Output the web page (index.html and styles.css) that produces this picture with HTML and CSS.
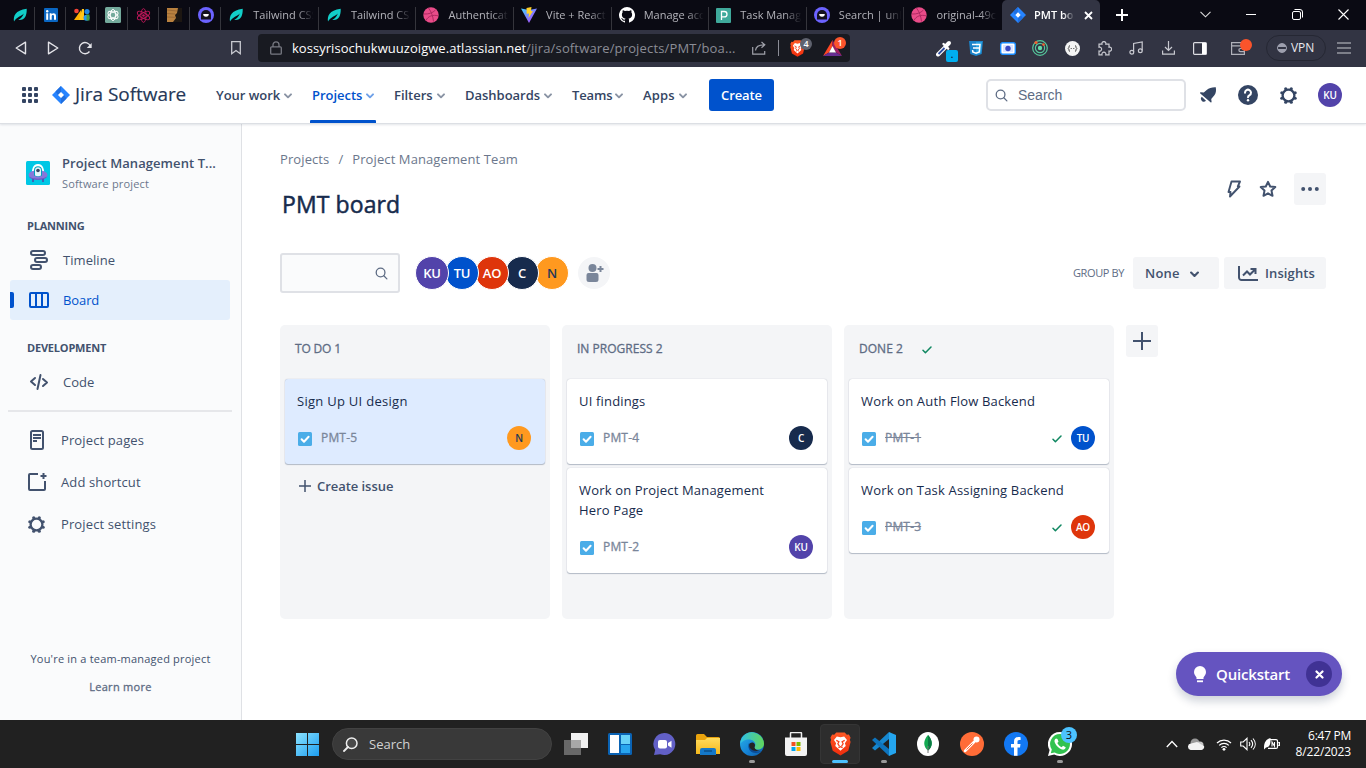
FILE: index.html
```html
<!DOCTYPE html>
<html lang="en">
<head>
<meta charset="utf-8">
<title>PMT board</title>
<link rel="stylesheet" href="styles.css">
</head>
<body>
<svg class="defs" width="0" height="0">
  <defs>
    <linearGradient id="gEdge" x1="0" y1="0" x2="1" y2="1"><stop offset="0" stop-color="#2bb4e8"/><stop offset=".55" stop-color="#1583d6"/><stop offset="1" stop-color="#0c59a4"/></linearGradient>
    <linearGradient id="gWave" x1="0" y1="0" x2="1" y2="0"><stop offset="0" stop-color="#2fc0e6"/><stop offset="1" stop-color="#62d65a"/></linearGradient>
    <linearGradient id="gWin" x1="0" y1="0" x2="1" y2="1"><stop offset="0" stop-color="#8be3ff"/><stop offset="1" stop-color="#1c9df0"/></linearGradient>
    <linearGradient id="gVite" x1="0" y1="0" x2="1" y2="1"><stop offset="0" stop-color="#41d1ff"/><stop offset="1" stop-color="#bd34fe"/></linearGradient>
    <linearGradient id="gFolder" x1="0" y1="0" x2="0" y2="1"><stop offset="0" stop-color="#ffdc5e"/><stop offset="1" stop-color="#f5b81c"/></linearGradient>
    <linearGradient id="gBrave" x1="0" y1="0" x2="0" y2="1"><stop offset="0" stop-color="#ff5a26"/><stop offset="1" stop-color="#f02c0c"/></linearGradient>
  </defs>
  <symbol id="leaf" viewBox="0 0 14 14"><path d="M1 13.500C.2 8 2 2.500 13.700.800 14 8 11.500 12.800 5.200 12 8 10.500 9.800 8.500 10.800 5.500 8.500 8 3.500 9 1 13.500Z" fill="#12cfc9"/></symbol>
  <symbol id="unlogo" viewBox="0 0 16 16"><circle cx="8" cy="8" r="8" fill="#6c63ff"/><path d="M3 12.500V8a5 5 0 0 1 10 0v4.500Z" fill="#14121f"/><path d="M5.200 7h5.600a2.800 2.800 0 0 1-5.600 0Z" fill="#fff"/></symbol>
  <symbol id="dribbble" viewBox="0 0 16 16"><circle cx="8" cy="8" r="7.700" fill="#ea4c89"/><path d="M1 7c4.500.2 8.500-.8 11.500-4M5.500 1c3 4 4.500 8.500 5 13.500M3 13.500C5 9 10 7.500 15 8.800" fill="none" stroke="#b02a62" stroke-width="1"/></symbol>
  <symbol id="jira" viewBox="0 0 18 18"><path d="M9 0l9 9-9 9-9-9Z" fill="#2684ff"/><path d="M9 0v6L6 9 3.500 5.500Z" fill="#1f6fe0"/><path d="M9 18v-6l3-3 2.500 3.500Z" fill="#1f6fe0"/><path d="M9 6l3 3-3 3-3-3Z" fill="#fff"/></symbol>
  <symbol id="chev" viewBox="0 0 8 6"><path d="M1 1.300l3 3 3-3" fill="none" stroke="currentColor" stroke-width="1.900" stroke-linecap="round" stroke-linejoin="round"/></symbol>
  <symbol id="gear" viewBox="0 0 20 20"><circle cx="10" cy="10" r="6.200" fill="none" stroke="currentColor" stroke-width="2.400"/><g fill="currentColor"><circle cx="7.100" cy="3" r="1.700"/><circle cx="12.900" cy="3" r="1.700"/><circle cx="17" cy="7.100" r="1.700"/><circle cx="17" cy="12.900" r="1.700"/><circle cx="12.900" cy="17" r="1.700"/><circle cx="7.100" cy="17" r="1.700"/><circle cx="3" cy="12.900" r="1.700"/><circle cx="3" cy="7.100" r="1.700"/></g></symbol>
  <symbol id="mag" viewBox="0 0 14 14"><circle cx="6" cy="6" r="4.700" fill="none" stroke="currentColor" stroke-width="1.400"/><path d="M9.500 9.500l3.300 3.300" stroke="currentColor" stroke-width="1.400" stroke-linecap="round"/></symbol>
  <symbol id="task" viewBox="0 0 14 14"><rect width="14" height="14" rx="1.500" fill="#4bade8"/><path d="M3.600 7.300l2.400 2.400 4.600-4.900" fill="none" stroke="#fff" stroke-width="2" stroke-linecap="round" stroke-linejoin="round"/></symbol>
  <symbol id="tick" viewBox="0 0 10 8"><path d="M1 4.300l2.400 2.500L9 1" fill="none" stroke="#118862" stroke-width="1.500" stroke-linecap="round" stroke-linejoin="round"/></symbol>
  <symbol id="brave" viewBox="0 0 20 22"><path d="M6 0h8l2 2.300 2-.3 1.600 3-.7 2 .7 2-2.200 8.500L10 22l-7.400-4.500L.4 9l.7-2-.7-2L2 2l2 .3Z" fill="url(#gBrave)"/><path d="M10 4.500l3.500-.7 2.700 3.400-2 3.200.8 2.600-5 4.500-5-4.500.8-2.600-2-3.200 2.700-3.400Z" fill="#fff"/><path d="M6 7.500l2.500 1.300-1 2 1.500 2.200M14 7.500l-2.500 1.300 1 2-1.500 2.200M8 14.500l2-1 2 1" fill="none" stroke="#f7401a" stroke-width="1.200"/></symbol>
</svg>

<header class="tabs">
  <div class="tab pin"><svg width="14" height="14"><use href="#leaf"/></svg></div>
  <div class="tab pin"><svg width="14" height="14" viewBox="0 0 14 14"><rect width="14" height="14" rx="1" fill="#0a66c2"/><g fill="#fff"><rect x="2.200" y="5.300" width="2" height="6.500"/><circle cx="3.200" cy="3.200" r="1.200"/><path d="M5.700 5.300h1.900v.9c1-1.500 4.400-1.400 4.400 1.600v4h-2V8.300c0-1.900-2.300-1.700-2.300 0v3.500h-2Z"/></g></svg></div>
  <div class="tab pin"><svg width="16" height="14" viewBox="0 0 16 14"><circle cx="2.500" cy="3" r="2.300" fill="#f44336"/><path d="M0 12L7 2v10Z" fill="#ffb300"/><path d="M8 1h2v11H5Z" fill="#ffc61a"/><circle cx="13" cy="3.600" r="2.600" fill="#1e88e5"/><circle cx="12.500" cy="9.700" r="3" fill="#2196f3"/><path d="M12.500 6.500h3v6h-3z" fill="#43a047"/></svg></div>
  <div class="tab pin"><svg width="16" height="16" viewBox="0 0 16 16"><rect width="16" height="16" rx="1.500" fill="#74aa9c"/><g fill="none" stroke="#fff" stroke-width="1"><ellipse cx="8" cy="8" rx="2.700" ry="5.500"/><ellipse cx="8" cy="8" rx="2.700" ry="5.500" transform="rotate(60 8 8)"/><ellipse cx="8" cy="8" rx="2.700" ry="5.500" transform="rotate(120 8 8)"/></g></svg></div>
  <div class="tab pin"><svg width="15" height="15" viewBox="0 0 16 16"><g fill="none" stroke="#c2185b" stroke-width="1"><ellipse cx="8" cy="8" rx="2.800" ry="7.300"/><ellipse cx="8" cy="8" rx="2.800" ry="7.300" transform="rotate(60 8 8)"/><ellipse cx="8" cy="8" rx="2.800" ry="7.300" transform="rotate(120 8 8)"/></g><circle cx="8" cy="8" r="1.400" fill="#c2185b"/></svg></div>
  <div class="tab pin"><svg width="15" height="14" viewBox="0 0 15 14"><rect width="15" height="14" fill="#1d1712"/><path d="M0 0h11l-1 5-2 2 1 3-3 4H0Z" fill="#b9813f"/><path d="M0 2l10 1M0 5.500l8 .5M0 9l8 .3" stroke="#8f6030" stroke-width=".7"/></svg></div>
  <div class="tab pin"><svg width="16" height="16"><use href="#unlogo"/></svg></div>
  <div class="tab"><svg width="14" height="14"><use href="#leaf"/></svg><span>Tailwind CSS</span></div>
  <div class="tab"><svg width="14" height="14"><use href="#leaf"/></svg><span>Tailwind CSS</span></div>
  <div class="tab"><svg width="16" height="16"><use href="#dribbble"/></svg><span>Authenticat</span></div>
  <div class="tab"><svg width="16" height="16" viewBox="0 0 16 16"><path d="M0 1.500L8 16l8-14.500-8 1.500Z" fill="url(#gVite)"/><path d="M5.500 1l5-1-.6 4 2 .2L7.500 11l.5-4.500-2.300.3Z" fill="#ffd028"/></svg><span>Vite + React</span></div>
  <div class="tab"><svg width="16" height="16" viewBox="0 0 16 16"><path fill="#fff" d="M8 0a8 8 0 0 0-2.500 15.600c.4 0 .5-.2.500-.4v-1.500c-2.200.5-2.700-1-2.700-1-.4-.9-.9-1.200-.9-1.200-.7-.5.1-.5.1-.5.800.1 1.200.8 1.200.8.700 1.200 1.900.9 2.300.7.100-.5.300-.9.500-1.100-1.800-.2-3.600-.9-3.600-4 0-.9.300-1.600.8-2.100-.1-.2-.4-1 .1-2.100 0 0 .7-.2 2.200.8a7.500 7.500 0 0 1 4 0c1.500-1 2.200-.8 2.200-.8.500 1.100.2 1.900.1 2.100.5.500.8 1.200.8 2.100 0 3.100-1.900 3.800-3.600 4 .3.200.5.700.5 1.500v2.300c0 .2.100.4.500.4A8 8 0 0 0 8 0Z"/></svg><span>Manage acc</span></div>
  <div class="tab"><svg width="15" height="15" viewBox="0 0 15 15"><rect width="15" height="15" rx="1" fill="#3fa99b"/><path d="M5.500 12V3.500h2.800a2.700 2.700 0 0 1 0 5.400H5.500" fill="none" stroke="#fff" stroke-width="1.300"/></svg><span>Task Manag</span></div>
  <div class="tab"><svg width="16" height="16"><use href="#unlogo"/></svg><span>Search | unD</span></div>
  <div class="tab last"><svg width="16" height="16"><use href="#dribbble"/></svg><span>original-49c</span></div>
  <div class="tab active"><svg width="16" height="16"><use href="#jira"/></svg><span>PMT bo</span><svg width="9" height="9" viewBox="0 0 9 9"><path d="M1 1l7 7M8 1L1 8" stroke="#fff" stroke-width="1.800"/></svg></div>
  <div class="newtab"><svg width="12" height="12" viewBox="0 0 12 12"><path d="M6 0v12M0 6h12" stroke="#fff" stroke-width="2"/></svg></div>
  <div class="winctl">
    <i><svg width="11" height="7" viewBox="0 0 11 7"><path d="M.5.800l5 5 5-5" fill="none" stroke="#ddd" stroke-width="1.100"/></svg></i>
    <i><svg width="10" height="2" viewBox="0 0 10 2"><path d="M0 .5h10" stroke="#fff"/></svg></i>
    <i><svg width="11" height="11" viewBox="0 0 11 11"><rect x=".5" y="2.500" width="8" height="8" rx="1.500" fill="none" stroke="#fff"/><path d="M2.500.5h5.500a2.500 2.500 0 0 1 2.500 2.500v5.500" fill="none" stroke="#fff"/></svg></i>
    <i><svg width="11" height="11" viewBox="0 0 11 11"><path d="M.5.500l10 10M10.500.5l-10 10" stroke="#fff" stroke-width="1.100"/></svg></i>
  </div>
</header>

<div class="toolbar">
  <div class="navbtns">
    <i><svg width="12" height="14" viewBox="0 0 12 14"><path d="M10.500 1.200v11.600L1.200 7Z" fill="none" stroke="#e3e3e8" stroke-width="1.400" stroke-linejoin="round"/></svg></i>
    <i><svg width="12" height="14" viewBox="0 0 12 14"><path d="M1.500 1.200v11.600L10.800 7Z" fill="none" stroke="#e3e3e8" stroke-width="1.400" stroke-linejoin="round"/></svg></i>
    <i><svg width="14" height="14" viewBox="0 0 14 14"><path d="M11.500 10.500a5.600 5.600 0 1 1 .8-5.300" fill="none" stroke="#e3e3e8" stroke-width="1.400"/><path d="M13.700 2v5H8.800Z" fill="#e3e3e8"/></svg></i>
  </div>
  <svg class="bookmark" width="10" height="14" viewBox="0 0 10 14"><path d="M.7.700h8.600v12L5 9.500.7 12.700Z" fill="none" stroke="#c8c9d0" stroke-width="1.300"/></svg>
  <div class="url">
    <svg class="lock" width="12" height="14" viewBox="0 0 12 14"><path d="M3 6V3.800a3 3 0 0 1 6 0V6" fill="none" stroke="#777982" stroke-width="1.300"/><rect x=".7" y="5.800" width="10.600" height="7.400" rx="1" fill="none" stroke="#777982" stroke-width="1.300"/></svg>
    <span class="host">kossyrisochukwuuzoigwe.atlassian.net</span><span class="path">/jira/software/projects/PMT/boa...</span>
    <svg class="share" width="14" height="14" viewBox="0 0 14 14"><path d="M.7 6v7.200h12V10" fill="none" stroke="#a0a2aa" stroke-width="1.200"/><path d="M3.500 9.500c.3-4 3-5.700 8.500-5.700M9.500 1l3.300 2.800-3.300 3" fill="none" stroke="#a0a2aa" stroke-width="1.200"/></svg>
    <b class="bar"></b>
    <span class="shield"><svg width="15" height="17"><use href="#brave"/></svg><em class="badge grey">4</em></span>
    <span class="shield rewards"><svg width="19" height="16" viewBox="0 0 19 16"><path d="M9.500 0L0 16l6-3.500L9.500 6Z" fill="#ff4724"/><path d="M9.500 0L19 16l-6-3.500L9.500 6Z" fill="#9e1f63"/><path d="M0 16h19l-6-3.500H6Z" fill="#662d91"/><path d="M9.500 6L13 12.500H6Z" fill="#fff"/></svg><em class="badge red">1</em></span>
  </div>
  <div class="exts">
    <i><svg width="16" height="17" viewBox="0 0 16 17"><path d="M2 14.500L9.500 7" stroke="#fff" stroke-width="4" stroke-linecap="round"/><path d="M2.500 14L8.500 8" stroke="#2d4a9d" stroke-width="1.800"/><path d="M7.500 4l4.700 4.700" stroke="#fff" stroke-width="2.400" stroke-linecap="round"/><path d="M10.500 5.500l2.500-2.500" stroke="#fff" stroke-width="4" stroke-linecap="round"/></svg><em class="note">.</em></i>
    <i><svg width="14" height="15" viewBox="0 0 14 15"><path d="M0 0h14l-1.300 13L7 15l-5.700-2Z" fill="#1b82c9"/><path d="M7 1h6l-1 11-5 1.700Z" fill="#2aa0e0"/><path d="M3 3.500h8L10.300 11 7 12.100 3.800 11l-.2-2M10.500 7H4" fill="none" stroke="#fff" stroke-width="1.500"/></svg></i>
    <i><svg width="16" height="13" viewBox="0 0 16 13"><rect x=".7" y=".7" width="14.600" height="11.600" rx="2" fill="#fff" stroke="#1a8cff" stroke-width="1.400"/><rect x="3" y="3" width="10" height="7" fill="#dce4ff"/><circle cx="8" cy="6.500" r="2.700" fill="#3947c4"/></svg></i>
    <i><svg width="16" height="16" viewBox="0 0 16 16"><g fill="none" stroke="#55c79c" stroke-width="1.200"><circle cx="8" cy="8" r="7.300"/><circle cx="8" cy="8" r="4.600"/></g><circle cx="8" cy="8" r="2.200" fill="#62dca8"/><circle cx="4" cy="2.500" r="1.600" fill="#f2622e"/><circle cx="11.500" cy="4.600" r="1.300" fill="#f2622e"/></svg></i>
    <i><svg width="15" height="15" viewBox="0 0 15 15"><circle cx="7.500" cy="7.500" r="7.500" fill="#f4f4f4"/><path d="M5 4.500c-1.500 0-.5 2.500-1.800 3 1.300.5.300 3 1.800 3M10 4.500c1.500 0 .5 2.500 1.800 3-1.300.5-.3 3-1.800 3" fill="none" stroke="#444"/><path d="M5.700 7h1v1h-1zM8.300 7h1v1h-1z" fill="#444"/></svg></i>
    <i><svg width="15" height="15" viewBox="0 0 15 15"><path d="M2 3.200h3a2 2 0 1 1 3.800 0H12v3a2 2 0 1 1 0 3.800v3.800H8.800a2 2 0 1 0-3.800 0H2V10a2 2 0 1 0 0-3.800Z" fill="none" stroke="#c8c9d0" stroke-width="1.200"/></svg></i>
    <i><svg width="14" height="14" viewBox="0 0 14 14"><g fill="none" stroke="#c8c9d0" stroke-width="1.200"><path d="M4.600 11V2.500L13.200 1v8.500"/><circle cx="2.800" cy="11.200" r="1.900"/><circle cx="11.300" cy="9.700" r="1.900"/></g></svg></i>
    <i><svg width="13" height="14" viewBox="0 0 13 14"><path d="M6.500 0v9M3 6l3.500 3.500L10 6M.6 9.500v3.700h11.800V9.500" fill="none" stroke="#c8c9d0" stroke-width="1.200"/></svg></i>
    <i><svg width="14" height="13" viewBox="0 0 14 13"><rect x=".6" y=".6" width="12.800" height="11.800" rx="1" fill="none" stroke="#dddde2" stroke-width="1.200"/><path d="M9 1h4v11H9Z" fill="#fff"/></svg></i>
  </div>
  <div class="wallet"><svg width="14" height="13" viewBox="0 0 14 13"><path d="M13.400 4v8.400H.6V.6h10.900M.6 3.800h12.800M13.400 6.500H9.500a1.500 1.500 0 0 0 0 3.200h3.900" fill="none" stroke="#b0b1ba" stroke-width="1.200"/></svg><b class="dot"></b></div>
  <div class="vpn"><b></b>VPN</div>
  <svg class="menu" width="14" height="12" viewBox="0 0 14 12"><path d="M0 1h14M0 6h14M0 11h14" stroke="#c8c9d0" stroke-width="1.200"/></svg>
</div>

<nav class="jnav">
  <svg class="apps" width="16" height="16" viewBox="0 0 16 16"><g fill="#344563"><rect width="4" height="4" rx="1"/><rect x="6" width="4" height="4" rx="1"/><rect x="12" width="4" height="4" rx="1"/><rect y="6" width="4" height="4" rx="1"/><rect x="6" y="6" width="4" height="4" rx="1"/><rect x="12" y="6" width="4" height="4" rx="1"/><rect y="12" width="4" height="4" rx="1"/><rect x="6" y="12" width="4" height="4" rx="1"/><rect x="12" y="12" width="4" height="4" rx="1"/></g></svg>
  <svg class="jlogo" width="18" height="18"><use href="#jira"/></svg>
  <span class="brand">Jira Software</span>
  <div class="menuitems">
    <a class="w1">Your work<svg width="8" height="6"><use href="#chev"/></svg></a>
    <a class="w2 on">Projects<svg width="8" height="6"><use href="#chev"/></svg></a>
    <a class="w3">Filters<svg width="8" height="6"><use href="#chev"/></svg></a>
    <a class="w4">Dashboards<svg width="8" height="6"><use href="#chev"/></svg></a>
    <a class="w5">Teams<svg width="8" height="6"><use href="#chev"/></svg></a>
    <a class="w6">Apps<svg width="8" height="6"><use href="#chev"/></svg></a>
  </div>
  <button class="create">Create</button>
  <div class="search"><svg width="13" height="13"><use href="#mag"/></svg>Search</div>
  <div class="jicons">
    <i><svg width="18" height="18" viewBox="0 0 18 18"><path d="M16.800 1.200c.5 3.500.3 6-1.600 8.300l-3 3.600.4 2.600c.1.700-.6 1-1.100.5L1.300 7.500c-.5-.5-.2-1.200.5-1.200l3 .1 2.900-2.500C10 2 13.200 1 16.800 1.200Z" fill="#344563"/><path d="M2.800 10.800a2.600 2.600 0 0 0 4.200 4Z" fill="#344563"/></svg></i>
    <i><svg width="20" height="20" viewBox="0 0 20 20"><circle cx="10" cy="10" r="10" fill="#344563"/><path d="M7 7.700a3 3 0 1 1 4.600 2.500c-1 .6-1.600 1-1.600 2.100" fill="none" stroke="#fff" stroke-width="2" stroke-linecap="round"/><circle cx="10" cy="15.300" r="1.200" fill="#fff"/></svg></i>
    <i class="gear"><svg width="19" height="19"><use href="#gear"/></svg></i>
    <i><b class="av sm ku">KU</b></i>
  </div>
</nav>

<div class="body">
  <aside class="side">
    <div class="proj">
      <svg width="24" height="24" viewBox="0 0 24 24"><rect width="24" height="24" rx="1.500" fill="#00c7e5"/><path d="M6 13.500c-.5-4 .5-10.500 6-10.500s6.500 6.500 6 10.500Z" fill="#fff"/><ellipse cx="12" cy="14" rx="9.500" ry="4.800" fill="#8777d9"/><path d="M8 14.500V9.300a4 4 0 0 1 8 0v5.200c-2 1.500-6 1.500-8 0Z" fill="#00a3bf"/><path d="M9 14.500V9.300a3 3 0 0 1 6 0v5.200c-1.500 1-4.500 1-6 0Z" fill="#e3f6fa"/><circle cx="12" cy="9.500" r="1.800" fill="#344563"/><path d="M3 15.500c4 3 14 3 18 0-2 4.300-16 4.300-18 0Z" fill="#6554c0"/><path d="M7 18v3M17 18v3" stroke="#5243aa" stroke-width="1.500"/></svg>
      <div><div class="pname">Project Management T...</div><div class="ptype">Software project</div></div>
    </div>
    <div class="label l1">PLANNING</div>
    <a class="row"><svg width="20" height="20" viewBox="0 0 20 20"><g fill="none" stroke="#42526e" stroke-width="2"><rect x="2" y="1" width="14" height="4" rx="2"/><rect x="6" y="8" width="12" height="4" rx="2"/><rect x="2" y="15" width="10" height="4" rx="2"/></g></svg>Timeline</a>
    <a class="row sel"><svg width="20" height="16" viewBox="0 0 20 16"><rect x="1" y="1" width="18" height="14" rx="1" fill="none" stroke="#0052cc" stroke-width="2"/><path d="M7 1v14M13 1v14" stroke="#0052cc" stroke-width="2"/></svg>Board</a>
    <div class="label l2">DEVELOPMENT</div>
    <a class="row"><svg width="20" height="18" viewBox="0 0 20 18"><path d="M6 5L2 8.500 6 12M14 6l4 3.500-4 3.500M11.500 2L8.500 16" fill="none" stroke="#42526e" stroke-width="2" stroke-linecap="round" stroke-linejoin="round"/></svg>Code</a>
    <hr>
    <a class="row low"><svg width="20" height="20" viewBox="0 0 20 20"><rect x="4" y="1" width="12" height="18" rx="1.500" fill="none" stroke="#42526e" stroke-width="2"/><path d="M6 5h8M6 8h8M6 11h4" stroke="#42526e" stroke-width="2"/></svg>Project pages</a>
    <a class="row low"><svg width="20" height="20" viewBox="0 0 20 20"><path d="M11 2H3a1 1 0 0 0-1 1v14a1 1 0 0 0 1 1h14a1 1 0 0 0 1-1V9" fill="none" stroke="#42526e" stroke-width="2"/><path d="M16.500 1v6M13.500 4h6" stroke="#42526e" stroke-width="2"/></svg>Add shortcut</a>
    <a class="row low gear"><svg width="19" height="19"><use href="#gear"/></svg>Project settings</a>
    <div class="foot"><div>You're in a team-managed project</div><div class="learn">Learn more</div></div>
  </aside>

  <main class="main">
    <div class="crumbs"><span>Projects</span><span>/</span><span>Project Management Team</span></div>
    <div class="titlerow">
      <h1>PMT board</h1>
      <div class="acts">
        <i><svg width="16" height="18" viewBox="0 0 16 18"><path d="M5.500 1.500h8.500L11.800 6.500h1.700L4 16.500 4.500 12H2.500Z" fill="none" stroke="#42526e" stroke-width="1.900" stroke-linejoin="round"/></svg></i>
        <i><svg width="18" height="18" viewBox="0 0 18 18"><path d="M9 1.800l2.200 4.700 5.100.6-3.800 3.500 1 5.200L9 13.300l-4.500 2.500 1-5.200L1.700 7.100l5.100-.6Z" fill="none" stroke="#42526e" stroke-width="2" stroke-linejoin="round"/></svg></i>
        <i class="more"><svg width="20" height="6" viewBox="0 0 20 6"><g fill="#42526e"><circle cx="3.200" cy="3" r="2"/><circle cx="10" cy="3" r="2"/><circle cx="16.800" cy="3" r="2"/></g></svg></i>
      </div>
    </div>
    <div class="filters">
      <div class="bsearch"><svg width="13" height="13"><use href="#mag"/></svg></div>
      <div class="team"><b class="av ku">KU</b><b class="av tu">TU</b><b class="av ao">AO</b><b class="av c">C</b><b class="av n">N</b></div>
      <div class="addp"><svg width="18" height="18" viewBox="0 0 18 18"><g fill="#7a869a"><circle cx="6.500" cy="4" r="4"/><path d="M.5 11a2 2 0 0 1 2-2h8a2 2 0 0 1 2 2v4.500A2.500 2.500 0 0 1 10 18H3A2.500 2.500 0 0 1 .5 15.500Z"/></g><path d="M14.500 2v6M11.500 5h6" stroke="#7a869a" stroke-width="2"/></svg></div>
      <span class="groupby">GROUP BY</span>
      <div class="btn none">None<svg width="9" height="7"><use href="#chev"/></svg></div>
      <div class="btn ins"><svg width="20" height="15" viewBox="0 0 20 15"><path d="M1 0v11.500A2.500 2.500 0 0 0 3.500 14H20" fill="none" stroke="#42526e" stroke-width="2"/><path d="M5 9.500L9 5.500l3 3L17 3.500M12.500 3H17.500v5" fill="none" stroke="#42526e" stroke-width="2"/></svg>Insights</div>
    </div>
    <div class="board">
      <section class="col">
        <h2 class="s1">TO DO 1</h2>
        <article class="card picked"><p class="t1">Sign Up UI design</p><div class="meta"><svg width="14" height="14"><use href="#task"/></svg><span>PMT-5</span><b class="av sm n">N</b></div></article>
        <div class="newissue"><svg width="12" height="12" viewBox="0 0 12 12"><path d="M6 0v12M0 6h12" stroke="#42526e" stroke-width="1.500"/></svg>Create issue</div>
      </section>
      <section class="col">
        <h2 class="s2">IN PROGRESS 2</h2>
        <article class="card"><p>UI findings</p><div class="meta"><svg width="14" height="14"><use href="#task"/></svg><span>PMT-4</span><b class="av sm c">C</b></div></article>
        <article class="card"><p>Work on Project Management Hero Page</p><div class="meta"><svg width="14" height="14"><use href="#task"/></svg><span>PMT-2</span><b class="av sm ku">KU</b></div></article>
      </section>
      <section class="col">
        <h2 class="s3">DONE 2<svg width="10" height="8"><use href="#tick"/></svg></h2>
        <article class="card"><p>Work on Auth Flow Backend</p><div class="meta done"><svg width="14" height="14"><use href="#task"/></svg><span>PMT-1</span><svg class="ok" width="10" height="8"><use href="#tick"/></svg><b class="av sm tu">TU</b></div></article>
        <article class="card"><p>Work on Task Assigning Backend</p><div class="meta done"><svg width="14" height="14"><use href="#task"/></svg><span>PMT-3</span><svg class="ok" width="10" height="8"><use href="#tick"/></svg><b class="av sm ao">AO</b></div></article>
      </section>
      <div class="addcol"><svg width="18" height="18" viewBox="0 0 18 18"><path d="M9 0v18M0 9h18" stroke="#42526e" stroke-width="2"/></svg></div>
    </div>
    <div class="quick"><svg width="12" height="17" viewBox="0 0 12 17"><path d="M6 0a6 6 0 0 1 6 6c0 2.500-1.500 3.800-2.500 5.500V13h-7v-1.500C1.500 9.800 0 8.500 0 6a6 6 0 0 1 6-6Z" fill="#fff"/><path d="M3 15.300h6" stroke="#fff" stroke-width="1.800"/></svg><span>Quickstart</span><b><svg width="9" height="9" viewBox="0 0 9 9"><path d="M1.500 1.500l6 6M7.500 1.500l-6 6" stroke="#fff" stroke-width="2.200" stroke-linecap="round"/></svg></b></div>
  </main>
</div>

<footer class="taskbar">
  <svg class="start" width="23" height="23" viewBox="0 0 23 23"><path d="M0 0h11v11H0zM12 0h11v11H12zM0 12h11v11H0zM12 12h11v11H12z" fill="url(#gWin)"/></svg>
  <div class="tsearch"><svg width="15" height="15" viewBox="0 0 15 15"><circle cx="8.700" cy="6.300" r="5.300" fill="#4a4a4a" stroke="#eee" stroke-width="1.500"/><path d="M5 10L1 14" stroke="#eee" stroke-width="1.800" stroke-linecap="round"/></svg>Search</div>
  <div class="apps-row">
    <i><svg width="24" height="22" viewBox="0 0 24 22"><rect x="7" width="17" height="15" fill="#f0f0f0"/><rect y="7" width="17" height="15" fill="#686868"/><rect x="7" y="7" width="10" height="8" fill="#a8a8a8"/></svg></i>
    <i><svg width="24" height="22" viewBox="0 0 24 22"><rect width="24" height="22" rx="1.500" fill="#0a63b4"/><rect x="2" y="2" width="9" height="18" fill="#fff"/><rect x="13" y="2" width="9" height="9" fill="#69d2f8"/><rect x="13" y="12" width="9" height="8" fill="#28a5ee"/></svg></i>
    <i><svg width="23" height="22" viewBox="0 0 23 22"><path d="M11.500 0a11 11 0 1 1-4.300 21.200L1 22l1.200-5A11 11 0 0 1 11.500 0Z" fill="#6260c6"/><rect x="5" y="7" width="9" height="8.500" rx="2" fill="#fff"/><path d="M15 10l3.500-2.300v7L15 12.500Z" fill="#fff"/></svg></i>
    <i><svg width="24" height="21" viewBox="0 0 24 21"><path d="M0 1.500A1.500 1.500 0 0 1 1.500 0H8l3 3h11.500A1.500 1.500 0 0 1 24 4.500V19H0Z" fill="#e9a30d"/><path d="M0 6h9l2-2h13v16H0Z" fill="url(#gFolder)"/><path d="M4 21v-5a2 2 0 0 1 2-2h12a2 2 0 0 1 2 2v5Z" fill="#1478c8"/><path d="M8 17h8" stroke="#0b4f8a" stroke-width="1.500"/></svg></i>
    <i class="run"><svg width="24" height="24" viewBox="0 0 24 24"><circle cx="12" cy="12" r="12" fill="url(#gEdge)"/><path d="M.5 9A12 12 0 0 1 24 11.500c0 4-3 6-6.500 6-2.500 0-4-1-2.800-2.500C17 11 13 7.500 9 7.500 5 7.500 1.500 9.500.5 12Z" fill="url(#gWave)"/><path d="M9 11c-2 5 1 10 7 10 2 0 4-.8 5.500-2-3 1-7.500.5-8.500-3Z" fill="#0b4a94"/><path d="M14.500 15.500C16 12 14 10.500 12 10.500c-2.500 0-3.500 3-2 5.500 2 3 6 3.500 10 2.500-3 0-5-1-5.500-3Z" fill="#232323"/></svg></i>
    <i><svg width="24" height="24" viewBox="0 0 24 24"><path d="M6.500 6V1.500A1 1 0 0 1 7.500.500h9a1 1 0 0 1 1 1V6" fill="none" stroke="#eee" stroke-width="1.500"/><path d="M1 5.500h22V22a2 2 0 0 1-2 2H3a2 2 0 0 1-2-2Z" fill="#f3f3f3"/><path d="M7.500 10h4v4h-4z" fill="#f25022"/><path d="M12.500 10h4v4h-4z" fill="#7fba00"/><path d="M7.500 15h4v4h-4z" fill="#00a4ef"/><path d="M12.500 15h4v4h-4z" fill="#ffb900"/></svg></i>
    <i class="cur"><svg width="21" height="24"><use href="#brave"/></svg></i>
    <i class="run"><svg width="24" height="24" viewBox="0 0 24 24"><path d="M17 0l7 3v18l-7 3Z" fill="#24a5ee"/><path d="M17 0v7L3 18.500 0 16Z" fill="#1687cf"/><path d="M17 24v-7L3 5.500 0 8Z" fill="#0e74bd"/></svg></i>
    <i><svg width="22" height="24" viewBox="0 0 22 24"><ellipse cx="11" cy="12" rx="11" ry="12" fill="#fff"/><path d="M11 3c5 5.500 5 11.500 0 15.500C6 14.500 6 8.500 11 3Z" fill="#13aa52"/><path d="M11 3c5 5.500 5 11.500 0 15.500Z" fill="#0b7a43"/><path d="M11 14v7" stroke="#777" stroke-width="1"/></svg></i>
    <i><svg width="24" height="24" viewBox="0 0 24 24"><circle cx="12" cy="12" r="12" fill="#ff6c37"/><path d="M5 19l9-9" stroke="#fff" stroke-width="2.500" stroke-linecap="round"/><path d="M6.500 17.500l6-6" stroke="#ff6c37"/><circle cx="16.500" cy="7.500" r="3" fill="#fff"/></svg></i>
    <i><svg width="24" height="24" viewBox="0 0 24 24"><circle cx="12" cy="12" r="12" fill="#1278f3"/><path d="M10 23.700V15.500H7V12h3V9.400C10 6.500 11.700 5 14.300 5c1.200 0 2.300.2 2.300.2v2.900h-1.400c-1.300 0-1.700.8-1.700 1.700V12h3l-.5 3.500h-2.500v8.300Z" fill="#fff"/></svg></i>
    <i class="run"><svg width="24" height="24" viewBox="0 0 24 24"><path d="M12 0a12 12 0 1 1-5.800 22.500L0 24l1.600-6A12 12 0 0 1 12 0Z" fill="#fff"/><path d="M12 2a10 10 0 1 1-5.300 18.500L2.800 21.300l1-3.800A10 10 0 0 1 12 2Z" fill="#31c24f"/><path d="M8 6.500c-1.500.5-2 2.500-1 4.500 1.500 3 4 5.500 7 6.500 2 .5 3.500-.5 3.700-2.300L15 13.800l-1.300 1.500c-2-.8-3.500-2.300-4.400-4.200l1.200-1.300-1-2.800Z" fill="#fff"/></svg><em>3</em></i>
  </div>
  <div class="tray">
    <svg width="12" height="8" viewBox="0 0 12 8"><path d="M.8 7L6 1.500 11.200 7" fill="none" stroke="#fff" stroke-width="1.300"/></svg>
    <svg class="cloud" width="17" height="12" viewBox="0 0 17 12"><circle cx="7" cy="5" r="4.500" fill="#999"/><circle cx="12" cy="7" r="3.500" fill="#c6c6c6"/><path d="M3 5.500a3.200 3.200 0 0 0 .5 6.500h10a3 3 0 0 0 2.500-4L9 4Z" fill="#f2f2f2"/></svg>
    <svg class="wifi" width="16" height="13" viewBox="0 0 16 13"><g fill="none" stroke="#fff" stroke-width="1.200"><path d="M1 5a9.900 9.900 0 0 1 14 0M3.200 7.400a6.700 6.700 0 0 1 9.600 0M5.400 9.600a3.700 3.700 0 0 1 5.200 0"/></g><circle cx="8" cy="11.300" r="1.400" fill="#fff"/></svg>
    <svg class="snd" width="16" height="14" viewBox="0 0 16 14"><g fill="none" stroke="#fff" stroke-width="1.100"><path d="M.7 5h2.500L7 1.300v11.400L3.200 9H.7Z"/><path d="M9 5c1 1.200 1 2.800 0 4M11 3.200c2 2.300 2 5.300 0 7.600M13 1.500c3 3.300 3 7.700 0 11"/></g></svg>
    <svg class="bat" width="16" height="12" viewBox="0 0 16 12"><path d="M6 1.600h6a1.500 1.500 0 0 1 1.500 1.500v5.800a1.500 1.500 0 0 1-1.500 1.500H4M14.300 4.500h1.100v3h-1.100" fill="none" stroke="#fff" stroke-width="1.200"/><path d="M8 8.500V4l2.500 4.300V4" fill="none" stroke="#fff" stroke-width="1.100"/><path d="M0 11.500C-.3 5 1.500 1.500 6.500 0c.3 5.500-.5 9-4.500 9.500Z" fill="#fff"/></svg>
    <div class="clock"><div>6:47 PM</div><div class="date">8/22/2023</div></div>
  </div>
</footer>
</body>
</html>
```
FILE: styles.css
```css
* { box-sizing: border-box; }
body { margin: 0; width: 1366px; height: 768px; overflow: hidden; font: 400 13px/20px "Open Sans", "Noto Sans", sans-serif; color: #172b4d; background: #fff; display: flex; flex-direction: column; letter-spacing: .14px; }
.defs { position: absolute; }
svg { display: block; flex: none; }
i, em { font-style: normal; }
i { display: flex; align-items: center; justify-content: center; }
a { color: inherit; }

/* Browser tab strip */
.tabs { height: 30px; flex: none; background: #0a0a13; display: flex; font-size: 11px; letter-spacing: 0; color: #b3b3ba; padding-left: 4.300px; }
.tab { width: 97.600px; height: 30px; display: flex; align-items: center; position: relative; padding-left: 7px; white-space: nowrap; flex: none; }
.tab::after { content: ""; position: absolute; right: 0; top: 7px; height: 23px; width: 1px; background: #35353c; }
.tab.pin { width: 31px; padding: 0; justify-content: center; }
.tab span { width: 68px; margin-left: 9px; -webkit-mask-image: linear-gradient(90deg, #000 66%, transparent 92%); mask-image: linear-gradient(90deg, #000 66%, transparent 92%); }
.tab:not(.pin) > svg[width="14"]:first-child { margin: 0 1px; }
.tab.active { background: #323443; border-radius: 5px 5px 0 0; color: #fff; font-weight: 600; width: 98px; padding-left: 8px; }
.tab.active::after, .tab.last::after { display: none; }
.tab.active span { width: 44px; margin-left: 8px; margin-right: 6px; }
.newtab { width: 44px; display: flex; align-items: center; justify-content: center; }
.winctl { margin-left: auto; display: flex; }
.winctl i { width: 46px; height: 29px; }

/* Browser toolbar */
.toolbar { height: 37px; flex: none; background: #323443; display: flex; align-items: center; color: #e8e8ee; padding-bottom: 1px; }
.navbtns { display: flex; padding-left: 5px; }
.navbtns i { width: 32px; }
.bookmark { margin-left: 130px; }
.url { margin-left: 17px; width: 592px; height: 28px; background: #181a21; border-radius: 4px; display: flex; align-items: center; padding-left: 12px; white-space: nowrap; }
.host { margin-left: 10px; color: #fff; letter-spacing: .04px; width: 234px; }
.path { color: #8b8d96; letter-spacing: .15px; width: 210px; }
.share { margin-left: 16px; }
.bar { width: 1px; height: 16px; background: #8b8d96; margin: 0 12px; }
.shield { position: relative; display: flex; }
.shield:not(.rewards) { margin-left: -1px; }
.rewards { margin-left: 18px; }
.badge { position: absolute; left: 10px; top: -2px; width: 12px; height: 12px; border-radius: 6px; font: 600 9px/12px "Open Sans", sans-serif; text-align: center; color: #fff; letter-spacing: 0; }
.badge.grey { background: #5f626e; }
.badge.red { left: 11px; top: -3px; background: #fb542b; }
.exts { display: flex; margin-left: 78px; }
.exts i { width: 32px; position: relative; }
.note { position: absolute; left: 18px; top: 12px; width: 12px; height: 12px; border-radius: 2px; background: #00aeef; color: #124; font: 700 9px/9px "Open Sans", sans-serif; text-align: center; }
.exts i:first-child { height: 20px; }
.wallet { margin-left: 15px; position: relative; }
.dot { position: absolute; left: 9px; top: -3px; width: 12px; height: 12px; border-radius: 50%; background: #fb542b; }
.vpn { margin-left: 21px; width: 60px; height: 26px; border: 1px solid #252733; border-radius: 13px; display: flex; align-items: center; font-size: 12px; letter-spacing: -.1px; padding-left: 10px; }
.vpn b { width: 10px; height: 10px; border-radius: 50%; background: linear-gradient(#9d9fae 3px, #323443 3px, #323443 5px, #9d9fae 5px); border: 1px solid #9d9fae; margin-right: 4px; }
.menu { margin-left: 11px; }

/* Product navigation */
.jnav { height: 57px; flex: none; display: flex; align-items: center; padding-left: 22px; border-bottom: 1px solid #dcdfe4; box-shadow: 0 1px 2px #091e421c; position: relative; z-index: 1; background: #fff; font-weight: 600; color: #344563; letter-spacing: -.02px; }
.jlogo { margin-left: 14px; }
.brand { font-size: 19px; font-weight: 400; letter-spacing: -.05px; margin-left: 5px; color: #253858; width: 136px; line-height: 24px; margin-top: -2px; -webkit-text-stroke: .15px #253858; }
.menuitems { display: flex; height: 56px; margin-left: 5px; white-space: nowrap; }
.menuitems a { display: flex; align-items: center; justify-content: space-between; margin-right: 20px; }
.menuitems svg { color: #8993a4; margin-top: 2px; }
.menuitems .on { color: #0052cc; position: relative; }
.menuitems .on svg { color: #6ea0e8; }
.menuitems .on::after { content: ""; position: absolute; left: -2px; right: -2px; bottom: 0; height: 3px; background: #0052cc; border-radius: 1px 1px 0 0; }
.w1 { width: 76px; } .w2 { width: 62px; } .w3 { width: 51px; } .w4 { width: 87px; } .w5 { width: 51px; letter-spacing: -.15px; } .w6 { width: 44px; letter-spacing: .15px; }
.create { width: 65px; height: 32px; border: 0; border-radius: 3px; background: #0052cc; color: #fff; font: inherit; margin-left: 2px; letter-spacing: -.1px; padding: 0; }
.search { margin-left: auto; width: 200px; height: 32px; border: 2px solid #dfe1e6; border-radius: 5px; display: flex; align-items: center; gap: 10px; padding-left: 7px; font: 14px "Liberation Sans", Arial, sans-serif; color: #5e6c84; letter-spacing: 0; }
.jicons { display: flex; margin: 0 14px 0 2px; }
.jicons i { width: 40px; }
.jicons i:last-child { width: 44px; }
.jicons .gear { color: #344563; }
.av { width: 34px; height: 34px; border-radius: 50%; border: 1px solid #fff; display: flex; align-items: center; justify-content: center; color: #fff; font-weight: 600; letter-spacing: -.2px; flex: none; }
.av.sm { width: 24px; height: 24px; border: 0; font-size: 10px; }
.ku { background: #5243aa; } .tu { background: #0052cc; } .ao { background: #de350b; } .c { background: #172b4d; } .n { background: #ff991f; color: #253858; }

/* Sidebar */
.body { flex: none; height: 596px; display: flex; }
.side { width: 242px; background: #fafbfc; border-right: 1px solid #dfe1e5; display: flex; flex-direction: column; color: #42526e; padding-top: 29px; }
.proj { display: flex; padding-left: 26px; height: 42px; gap: 12px; }
.proj > svg { margin-top: 8px; }
.pname { font-weight: 600; line-height: 20px; letter-spacing: .07px; }
.ptype { font-size: 11px; letter-spacing: .16px; color: #6b778c; line-height: 20px; margin-top: 1px; }
.label { font-size: 11px; font-weight: 700; padding-left: 27px; letter-spacing: -.2px; line-height: 16px; }
.l1 { margin: 23px 0 6px; }
.l2 { margin: 20px 0 6px; }
.row { height: 40px; width: 220px; margin: 0 10px; border-radius: 3px; display: flex; align-items: center; gap: 14px; padding-left: 19px; letter-spacing: .05px; }
.sel { background: #e4effc; color: #0052cc; letter-spacing: -.1px; position: relative; }
.sel::before { content: ""; position: absolute; left: 0; top: 12px; width: 4px; height: 16px; background: #0052cc; border-radius: 0 2px 2px 0; }
.side hr { border: 0; height: 2px; background: #e6e7ea; margin: 8px 8px 7px; width: 224px; }
.low { height: 42px; padding-left: 17px; letter-spacing: .12px; }
.low.gear { gap: 15px; }
.foot { margin-top: auto; text-align: center; font-size: 11px; letter-spacing: .2px; padding-bottom: 23px; }
.learn { margin-top: 8px; color: #5e6c84; -webkit-text-stroke: .3px #5e6c84; letter-spacing: .3px; }

/* Board */
.main { flex: 1; padding: 25px 40px 0 38px; position: relative; }
.crumbs { display: flex; gap: 9px; color: #6b778c; letter-spacing: .1px; }
.titlerow { display: flex; justify-content: space-between; margin-top: 4px; height: 49px; }
h1 { margin: 15px 0 0 2px; font-size: 23px; font-weight: 400; line-height: 32px; letter-spacing: .1px; -webkit-text-stroke: .5px #172b4d; }
.acts { display: flex; }
.acts i { width: 32px; height: 32px; margin-left: 2px; }
.acts .more { background: #f4f5f7; border-radius: 3px; margin-left: 10px; }
.filters { display: flex; align-items: center; margin-top: 31px; height: 40px; color: #42526e; font-weight: 600; }
.bsearch { width: 120px; height: 40px; border: 2px solid #dfe1e6; background: #fafbfc; border-radius: 3px; display: flex; align-items: center; justify-content: flex-end; padding-right: 10px; color: #5e6c84; }
.team { display: flex; margin-left: 15px; }
.team .av { margin-right: -4px; position: relative; }
.team .av:nth-child(1) { z-index: 5; } .team .av:nth-child(2) { z-index: 4; } .team .av:nth-child(3) { z-index: 3; } .team .av:nth-child(4) { z-index: 2; }
.addp { width: 32px; height: 32px; border-radius: 50%; background: #f4f5f7; margin-left: 13px; display: flex; align-items: center; justify-content: center; padding-left: 2px; }
.groupby { margin-left: auto; font-size: 11px; font-weight: 400; letter-spacing: -.38px; color: #5e6c84; margin-right: 9px; }
.btn { height: 32px; background: #f4f5f7; border-radius: 3px; display: flex; align-items: center; }
.none { width: 86px; padding-left: 12px; gap: 10px; letter-spacing: .25px; }
.none svg { margin-top: 2px; }
.ins { width: 102px; margin-left: 5px; padding-left: 14px; gap: 7px; letter-spacing: .1px; }
.board { display: flex; gap: 12px; margin-top: 32px; align-items: flex-start; }
.col { width: 270px; height: 294px; background: #f4f5f7; border-radius: 5px; padding: 0 5px; }
h2 { margin: 0; height: 54px; padding: 0 0 6px 10px; display: flex; align-items: center; font-size: 12px; font-weight: 400; letter-spacing: .02px; color: #5e6c84; -webkit-text-stroke: .3px #5e6c84; }
.s1 { letter-spacing: -.18px; }
h2 svg { margin: 2px 0 0 19px; }
.card { background: #fff; border-radius: 3px; box-shadow: 0 1px 1px #091e4240, 0 0 1px #091e424f; padding: 12px 14px 0 12px; margin-bottom: 4px; }
.card p { margin: 0; width: 210px; letter-spacing: .17px; }
.card .t1 { letter-spacing: .28px; }
.picked { background: #deebff; }
.meta { display: flex; align-items: center; margin-top: 15px; height: 38px; padding-bottom: 14px; font-size: 12px; color: #7a869a; letter-spacing: .17px; padding-left: 1px; }
.meta > svg:first-child { margin-top: 2px; }
.meta span { margin-left: 9px; margin-right: auto; -webkit-text-stroke: .3px #7a869a; }
.done span { text-decoration: line-through; }
.ok { margin-right: 9px; margin-top: 2px; }
.newissue { display: flex; align-items: center; gap: 6px; padding-left: 14px; margin-top: 12px; font-weight: 600; color: #42526e; letter-spacing: -.05px; }
.addcol { width: 32px; height: 32px; border-radius: 3px; background: #f4f5f7; display: flex; align-items: center; justify-content: center; }
.quick { position: absolute; right: 24px; bottom: 24px; width: 166px; height: 44px; border-radius: 22px; background: #6554c0; box-shadow: 0 5px 10px #091e4233; color: #fff; display: flex; align-items: center; padding-left: 18px; font-size: 15px; font-weight: 600; letter-spacing: -.18px; }
.quick span { width: 74px; margin: 0 16px 0 10px; }
.quick b { width: 26px; height: 26px; border-radius: 50%; background: #403294; display: flex; align-items: center; justify-content: center; }

/* Desktop taskbar */
.taskbar { height: 48px; flex: none; background: #212121; color: #fff; display: flex; align-items: center; padding-left: 296px; }
.tsearch { margin-left: 13px; width: 220px; height: 32px; border-radius: 16px; background: #393939; border: 1px solid #424242; display: flex; align-items: center; padding-left: 10px; gap: 11px; color: #d2d2d2; letter-spacing: 0; }
.apps-row { display: flex; margin-left: 2px; }
.apps-row i { width: 44px; height: 48px; position: relative; }
.apps-row i svg { position: relative; }
.apps-row .run::after { content: ""; position: absolute; left: 19px; bottom: 5px; width: 6px; height: 3px; border-radius: 2px; background: #9a9a9a; }
.cur::before { content: ""; position: absolute; inset: 4px 2px; background: #2d2d2d; border: 1px solid #353535; border-radius: 4px; }
.cur::after { content: ""; position: absolute; left: 14px; bottom: 5px; width: 16px; height: 3px; border-radius: 2px; background: #4cc2ff; }
.apps-row em { position: absolute; right: 5px; top: 7px; width: 16px; height: 16px; border-radius: 50%; background: #4cc2ff; color: #111; font-size: 11px; line-height: 16px; text-align: center; }
.tray { margin-left: auto; display: flex; align-items: center; padding-right: 15px; }
.cloud { margin-left: 10px; }
.wifi { margin-left: 11px; }
.snd { margin-left: 8px; }
.bat { margin-left: 8px; }
.clock { width: 71px; text-align: right; font-size: 12px; line-height: 16px; letter-spacing: -.28px; }
.date { letter-spacing: -.15px; }
```
